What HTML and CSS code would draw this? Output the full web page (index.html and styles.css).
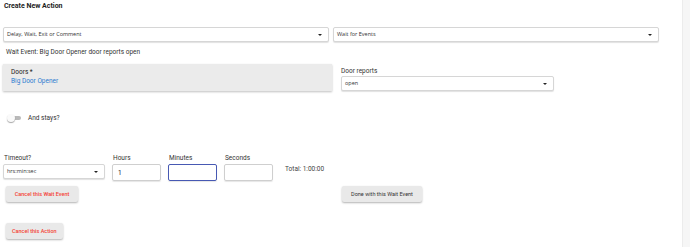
FILE: index.html
```html
<!DOCTYPE html>
<html lang="en">
<head>
    <meta charset="UTF-8">
    <meta name="viewport" content="width=device-width, initial-scale=1.0">
    <title>Create New Action</title>
    <link rel="stylesheet" href="styles.css">
</head>
<body>
    <div class="page">
        <div class="main">
            <div class="title">Create New Action</div>

            <div class="select-row">
                <div class="select wide">Delay, Wait, Exit or Comment<span class="caret"></span></div>
                <div class="select wide">Wait for Events<span class="caret"></span></div>
            </div>

            <div class="summary">Wait Event: Big Door Opener door reports open</div>

            <div class="device-row">
                <div class="device-card">
                    <div class="device-label">Doors *</div>
                    <div class="device-name">Big Door Opener</div>
                </div>
                <div class="field">
                    <div class="field-label">Door reports</div>
                    <div class="select reports">open<span class="caret"></span></div>
                </div>
            </div>

            <div class="toggle-row">
                <div class="toggle"><span class="thumb"></span></div>
                <span>And stays?</span>
            </div>

            <div class="timeout-row">
                <div class="field">
                    <div class="field-label">Timeout?</div>
                    <div class="select timeout">hrs:min:sec<span class="caret"></span></div>
                </div>
                <div class="field">
                    <div class="field-label">Hours</div>
                    <div class="num-input">1</div>
                </div>
                <div class="field">
                    <div class="field-label">Minutes</div>
                    <div class="num-input focused"></div>
                </div>
                <div class="field">
                    <div class="field-label">Seconds</div>
                    <div class="num-input"></div>
                </div>
                <div class="total">Total: 1:00:00</div>
            </div>

            <div class="button-row">
                <button class="btn danger cancel-wait">Cancel this Wait Event</button>
                <button class="btn done">Done with this Wait Event</button>
            </div>

            <div class="button-row last">
                <button class="btn danger">Cancel this Action</button>
            </div>
        </div>
        <div class="scrollbar"></div>
    </div>
</body>
</html>
```

FILE: styles.css
```css
* {
    margin: 0;
    padding: 0;
    box-sizing: border-box;
    font-family: Roboto, 'Liberation Sans', Arial, sans-serif;
}

body {
    background: white;
    color: #333;
    font-size: 6.5px;
}

.page {
    display: flex;
    width: 690px;
    height: 247px;
    overflow: hidden;
}

.main {
    flex: 1;
    padding: 2px 0 0 3px;
}

.scrollbar {
    width: 8px;
    background: #f6f6f6;
    border-left: 1px solid #ececec;
}

.title {
    font-weight: 700;
    font-size: 7px;
    color: #222;
    padding-left: 1px;
    line-height: 9px;
}

.select-row {
    display: flex;
    gap: 4px;
    margin-top: 16px;
}

.select {
    position: relative;
    height: 15px;
    line-height: 13px;
    border: 1px solid #d6d6d6;
    border-radius: 2px;
    background: white;
    box-shadow: 0 1px 1px rgba(0,0,0,0.12);
    padding-left: 3px;
    font-family: 'Open Sans', Roboto, sans-serif;
    font-size: 5.5px;
    color: #333;
}

.select.wide {
    width: 326px;
}

.caret {
    position: absolute;
    right: 6px;
    top: 6px;
    border-left: 2px solid transparent;
    border-right: 2px solid transparent;
    border-top: 2px solid #222;
}

.summary {
    margin-top: 6px;
    padding-left: 3px;
    line-height: 9px;
}

.device-row {
    display: flex;
    gap: 9px;
    margin-top: 7px;
}

.device-card {
    width: 329px;
    height: 27px;
    background: #ebebeb;
    box-shadow: 0 1px 2px rgba(0,0,0,0.25);
    padding: 4px 0 0 8px;
    line-height: 9px;
}

.device-label {
    color: #222;
}

.device-name {
    color: #2b7bd0;
}

.field-label {
    line-height: 9px;
    margin-top: 3px;
    color: #333;
}

.select.reports {
    width: 213px;
    margin-top: 0;
}

.toggle-row {
    display: flex;
    align-items: center;
    gap: 7px;
    margin-top: 23px;
    padding-left: 4px;
    color: #333;
}

.toggle {
    position: relative;
    width: 14px;
    height: 8px;
}

.toggle::before {
    content: '';
    position: absolute;
    left: 3px;
    top: 2px;
    width: 11px;
    height: 4px;
    border-radius: 2px;
    background: #b9b9b9;
}

.thumb {
    position: absolute;
    left: 0;
    top: 0;
    width: 8px;
    height: 8px;
    border-radius: 50%;
    background: #fafafa;
    box-shadow: 0 1px 1px rgba(0,0,0,0.35);
}

.timeout-row {
    display: flex;
    gap: 7px;
    margin-top: 32px;
}

.timeout-row .field-label {
    margin-top: 0;
    padding-left: 1px;
    margin-bottom: 1px;
}

.select.timeout {
    width: 102px;
}

.num-input {
    width: 49px;
    height: 17px;
    line-height: 17px;
    border: 1px solid #cfcfcf;
    border-radius: 2px;
    box-shadow: 0 1px 1px rgba(0,0,0,0.1);
    padding-left: 5px;
    color: #222;
}

.num-input.focused {
    border-color: #4759b3;
}

.total {
    margin: 11px 0 0 5px;
    color: #444;
}

.button-row {
    display: flex;
    margin-top: 5px;
    padding-left: 3px;
}

.button-row.last {
    margin-top: 21px;
}

.btn {
    height: 16px;
    padding: 0 6px;
    border: none;
    border-radius: 2px;
    background: #e9e9e9;
    box-shadow: 0 1px 2px rgba(0,0,0,0.3);
    font-size: 5.5px;
    font-weight: 500;
    color: #333;
}

.btn.danger {
    color: #f44336;
}

.cancel-wait {
    width: 72px;
}

.done {
    width: 80px;
    margin-left: 264px;
    font-weight: 400;
}
```
